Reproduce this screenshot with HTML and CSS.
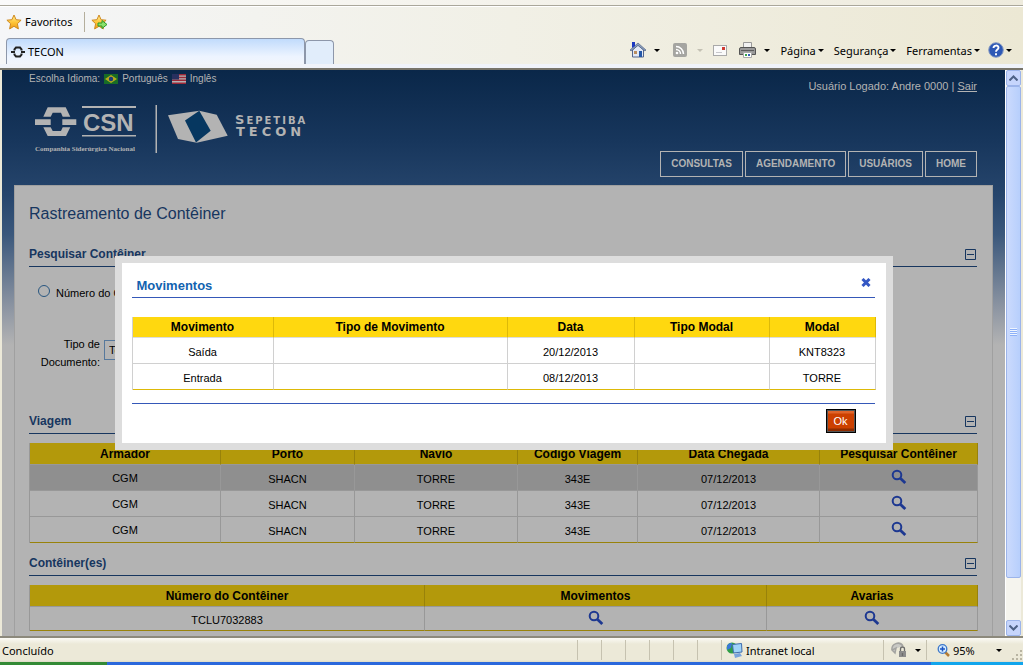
FILE: index.html
```html
<!DOCTYPE html>
<html lang="pt-BR">
<head>
<meta charset="utf-8">
<title>TECON</title>
<link rel="stylesheet" href="styles.css">
</head>
<body>
<svg class="defs" aria-hidden="true">
  <linearGradient id="gold" x1="0" y1="0" x2="0" y2="1"><stop offset="0" stop-color="#fff0a0"/><stop offset=".5" stop-color="#ffc83c"/><stop offset="1" stop-color="#f09a10"/></linearGradient>
  <symbol id="lens" viewBox="0 0 16 16"><circle cx="6" cy="6" r="4.3" fill="none" stroke="#1d3891" stroke-width="2"/><path d="M9.3 9.3l5 4.8" stroke="#1d3891" stroke-width="2.8"/></symbol>
  <symbol id="star" viewBox="0 0 16 16"><path d="M8 1l2.1 4.7 5 .5-3.7 3.500 1 5.200L8 12.300l-4.400 2.600 1-5.200L.9 6.200l5-.5z" fill="url(#gold)" stroke="#cf8a20"/></symbol>
  <symbol id="minus" viewBox="0 0 11 11"><path d="M.5.5h10v10H.5zM2 5.500h7" fill="none" stroke="#17365f"/></symbol>
</svg>
<header class="chrome">
  <div class="sliver"></div>
  <div class="favbar">
    <button class="fav"><svg width="16" height="16"><use href="#star"/></svg>Favoritos</button>
    <span class="divider"></span>
    <button class="fav" aria-label="Adicionar a favoritos"><svg width="18" height="16" viewBox="0 0 18 16"><use href="#star" width="16" height="16"/><path d="M7 9h4V6.500l5 4-5 4V12H7z" fill="#8be06a" stroke="#2e9a2a"/></svg></button>
  </div>
  <div class="tabrow">
    <button class="tab"><svg width="14" height="12" viewBox="0 0 14 12"><path d="M0 6h4M10 6h4" stroke="#222" stroke-width="2"/><path d="M3.500 4.500V3.300L5 1.500h4l1.500 1.800v1.200M3.500 7.500v1.200L5 10.500h4l1.500-1.800V7.500" fill="none" stroke="#222" stroke-width="2"/></svg>TECON</button>
    <button class="newtab" aria-label="Nova guia"></button>
    <div class="tools">
      <button aria-label="Página inicial" class="t-home"><svg width="16" height="16" viewBox="0 0 16 16"><path d="M2.500 8v7h11V8L8 3z" fill="#e3e9f5" stroke="#53658c"/><path d="M0 8L8 1l8 7-1 1-7-5.500L1 9z" fill="#8da0bd" stroke="#44577d" stroke-width=".6"/><path d="M2 0h3v4l-3 2z" fill="#1b38c0"/><path d="M9 9h3v6H9z" fill="#2457a8"/><path d="M4 9h3v3H4z" fill="#b98d60"/></svg><i></i></button>
      <button aria-label="Feeds" class="t-rss"><svg width="14" height="14" viewBox="0 0 14 14"><rect width="14" height="14" rx="2" fill="#a5a5a1"/><circle cx="4" cy="10" r="1.300" fill="#fff"/><path d="M3 6.500a4.500 4.500 0 0 1 4.500 4.500M3 3.500a7.500 7.500 0 0 1 7.500 7.500" fill="none" stroke="#fff" stroke-width="1.500"/></svg><i class="pale"></i></button>
      <button aria-label="E-mail" class="t-mail"><svg width="14" height="11" viewBox="0 0 14 11"><rect x=".5" y=".5" width="13" height="10" fill="#fafafa" stroke="#a9a9a9"/><path d="M9 2h3v3H9z" fill="#cf3a32"/><path d="M3 7.500h6" stroke="#c8c8cc"/></svg></button>
      <button aria-label="Imprimir" class="t-print"><svg width="17" height="16" viewBox="0 0 17 16"><path d="M4.500.5h8V7h-8z" fill="#f2f2f2" stroke="#999"/><path d="M.5 7Q.5 5.500 2 5.500h13q1.500 0 1.500 1.500v5.500H.5z" fill="#9a9a9a" stroke="#555"/><path d="M2 8.500h13" stroke="#5c5c5c"/><path d="M4.500 10.500h8v5h-8z" fill="#fff" stroke="#aaa"/><path d="M6 12h2v2H6z" fill="#38a548"/><path d="M9 12h2v2H9z" fill="#355db8"/></svg><i></i></button>
      <button class="menu m1">Página<i></i></button>
      <button class="menu m2">Segurança<i></i></button>
      <button class="menu m3">Ferramentas<i></i></button>
      <button aria-label="Ajuda" class="menu help"><svg width="16" height="16" viewBox="0 0 16 16"><circle cx="8" cy="8" r="7.300" fill="#2d58b5" stroke="#889cc3"/><path d="M5.500 6c0-3.200 5-3.200 5-.2C10.500 7.600 8 7.600 8 9.800M8 11.300v1.900" fill="none" stroke="#fff" stroke-width="1.900"/></svg><i></i></button>
    </div>
  </div>
</header>

<div class="window">
  <div class="viewport">
    <div class="top">
      <div class="brand">
        <div class="langs">Escolha Idioma:
          <a href="#pt"><svg width="14" height="10" viewBox="0 0 14 10"><path d="M0 0h14v10H0z" fill="#176c26"/><path d="M7 1l6 4-6 4-6-4z" fill="#b5aa1c"/><circle cx="7" cy="5" r="2.200" fill="#1d3b78"/></svg>Português</a>
          <a href="#en"><svg width="14" height="10" viewBox="0 0 14 10"><path d="M0 0h14v10H0z" fill="#b3b3b3"/><path d="M0 .7h14M0 3.500h14M0 6.300h14M0 9.200h14" stroke="#9c2838" stroke-width="1.500"/><path d="M0 0h7v5.500H0z" fill="#28305f"/></svg>Inglês</a>
        </div>
        <svg class="logo" width="280" height="50" viewBox="0 0 280 50" fill="#b3b3b3">
          <path d="M12.700 2.300h18l4.600 9.400h-7.600L26 7.700h-8.300l-2 4H8.300zM8.300 22.300h7.400l2 3.700H26l1.700-3.700h7.600L31 31H12.700zM0 14.300h15.700V20H0zM27.300 14.300h14V20h-14z"/>
          <path d="M47 1h54v2H47zM47 30h54v1.500H47z"/>
          <text class="csn" x="48" y="26">CSN</text>
          <text class="tagline" x="0" y="46">Companhia Siderúrgica Nacional</text>
          <path d="M120.500 0h1.500v48h-1.500z"/>
          <path d="M133 10.300l31.300-4.600 17.400 4 11 21-31 7-18.700-3.700z"/>
          <path d="M164.300 5.700L150 15.500l11 22 14.700-11.800z" fill="#063760"/>
          <text class="name" x="200" y="19">S<tspan class="small">EPETIBA</tspan></text>
          <text class="name wide" x="201" y="31">TECON</text>
        </svg>
      </div>
      <div class="account">
        <div class="user">Usuário Logado: Andre 0000 | <a href="#sair">Sair</a></div>
        <nav><a href="#consultas">CONSULTAS</a><a href="#agendamento">AGENDAMENTO</a><a href="#usuarios">USUÁRIOS</a><a href="#home">HOME</a></nav>
      </div>
    </div>
    <main>
      <h1>Rastreamento de Contêiner</h1>
      <div class="sec"><h2>Pesquisar Contêiner</h2><button aria-label="Recolher pesquisa"><svg width="11" height="11"><use href="#minus"/></svg></button></div>
      <form>
        <div class="radio"><input type="radio" id="num"><label for="num">Número do Contêiner</label></div>
        <div class="field"><label for="tipo">Tipo de Documento:</label><select id="tipo"><option>Todos</option></select></div>
      </form>
      <div class="sec"><h2>Viagem</h2><button aria-label="Recolher viagem"><svg width="11" height="11"><use href="#minus"/></svg></button></div>
      <table class="grid trips">
        <colgroup><col class="owner"><col class="port"><col class="ship"><col class="code"><col class="date"><col class="find"></colgroup>
        <thead><tr><th>Armador</th><th>Porto</th><th>Navio</th><th>Código Viagem</th><th>Data Chegada</th><th>Pesquisar Contêiner</th></tr></thead>
        <tbody>
          <tr class="sel"><td>CGM</td><td>SHACN</td><td>TORRE</td><td>343E</td><td>07/12/2013</td><td class="act"><button aria-label="Pesquisar"><svg width="16" height="16"><use href="#lens"/></svg></button></td></tr>
          <tr><td>CGM</td><td>SHACN</td><td>TORRE</td><td>343E</td><td>07/12/2013</td><td class="act"><button aria-label="Pesquisar"><svg width="16" height="16"><use href="#lens"/></svg></button></td></tr>
          <tr><td>CGM</td><td>SHACN</td><td>TORRE</td><td>343E</td><td>07/12/2013</td><td class="act"><button aria-label="Pesquisar"><svg width="16" height="16"><use href="#lens"/></svg></button></td></tr>
        </tbody>
      </table>
      <div class="sec"><h2>Contêiner(es)</h2><button aria-label="Recolher contêineres"><svg width="11" height="11"><use href="#minus"/></svg></button></div>
      <table class="grid boxes">
        <colgroup><col class="number"><col class="moved"><col class="damage"></colgroup>
        <thead><tr><th>Número do Contêiner</th><th>Movimentos</th><th>Avarias</th></tr></thead>
        <tbody><tr><td>TCLU7032883</td><td class="act"><button aria-label="Ver movimentos"><svg width="16" height="16"><use href="#lens"/></svg></button></td><td class="act"><button aria-label="Ver avarias"><svg width="16" height="16"><use href="#lens"/></svg></button></td></tr></tbody>
      </table>
    </main>
    <div class="overlay">
      <section class="modal" role="dialog" aria-labelledby="mt">
        <div class="mhead"><h2 id="mt">Movimentos</h2><button aria-label="Fechar"><svg width="10" height="9" viewBox="0 0 10 9"><path d="M1.500 1l7 7M8.500 1l-7 7" stroke="#3457c4" stroke-width="3"/></svg></button></div>
        <table class="grid moves">
          <colgroup><col class="move"><col class="kind"><col class="when"><col class="modekind"><col class="mode"></colgroup>
          <thead><tr><th>Movimento</th><th>Tipo de Movimento</th><th>Data</th><th>Tipo Modal</th><th>Modal</th></tr></thead>
          <tbody><tr><td>Saída</td><td></td><td>20/12/2013</td><td></td><td>KNT8323</td></tr><tr><td>Entrada</td><td></td><td>08/12/2013</td><td></td><td>TORRE</td></tr></tbody>
        </table>
        <div class="mfoot"><button>Ok</button></div>
      </section>
    </div>
  </div>
  <div class="scroll">
    <button aria-label="Rolar para cima"><svg width="9" height="6" viewBox="0 0 9 6"><path d="M.5 5.500l4-4 4 4" fill="none" stroke="#4d6185" stroke-width="2"/></svg></button>
    <div class="thumb"><span></span></div>
    <button aria-label="Rolar para baixo"><svg width="9" height="6" viewBox="0 0 9 6"><path d="M.5.5l4 4 4-4" fill="none" stroke="#4d6185" stroke-width="2"/></svg></button>
  </div>
</div>

<footer class="status">
  <span class="done">Concluído</span>
  <span class="cell"></span><span class="cell"></span><span class="cell"></span><span class="cell"></span><span class="cell"></span><span class="cell"></span>
  <span class="zone"><svg width="17" height="16" viewBox="0 0 17 16"><circle cx="6" cy="6" r="5.500" fill="#2f9e46"/><path d="M1 4a5 5 0 0 1 5-3l-1 5-4 2z" fill="#3a78d8"/><path d="M6.500 2.500l9-1 .5 8.500-8.500 1z" fill="#9fd4f8" stroke="#3f6cae"/><path d="M8 12l6-1 2 3-7 2z" fill="#7aa4dc"/></svg>Intranet local</span>
  <button class="lock" aria-label="Modo protegido"><svg width="17" height="16" viewBox="0 0 17 16"><path d="M1 8a6 6 0 0 1 11-4M4 11L1 8l4-2z" fill="#c9c9c5" stroke="#a3a3a0" stroke-width="1.500"/><path d="M8 9h7v6H8z" fill="#8c8c8c"/><path d="M9.500 9V7a2 2 0 0 1 4 0v2M11.500 11v3" fill="none" stroke="#6b6b6b" stroke-width="1.300"/></svg><i></i></button>
  <button class="zoom"><svg width="13" height="13" viewBox="0 0 13 13"><path d="M8 8l4 4" stroke="#b57b33" stroke-width="2.500"/><circle cx="5.500" cy="5" r="4.300" fill="#d6ecff" stroke="#3b76c9" stroke-width="1.300"/><path d="M3 5h5M5.500 2.500v5" stroke="#1b55c4" stroke-width="1.500"/></svg>95%<i></i></button>
  <svg class="grip" width="12" height="12" viewBox="0 0 12 12"><path d="M9 0h2v2H9zM5 4h2v2H5zM9 4h2v2H9zM1 8h2v2H1zM5 8h2v2H5zM9 8h2v2H9z" fill="#b8b4a2"/></svg>
</footer>
<div class="taskbar"><span class="start"></span><span class="tasks"></span><span class="tray"></span></div>
</body>
</html>
```
FILE: styles.css
```css
* { box-sizing: border-box; }
body { margin: 0; height: 100vh; display: flex; flex-direction: column; overflow: hidden; font: 11px "Liberation Sans", Arial, sans-serif; color: #000; background: #ece9d8; }
button { font: inherit; color: inherit; background: none; border: 0; padding: 0; display: inline-flex; align-items: center; }
h1, h2 { margin: 0; }
svg { flex: none; }
i { border: 3px solid transparent; border-top-color: #000; border-bottom: 0; }
.pale { border-top-color: #c4c1b4; }
.defs { position: absolute; width: 0; height: 0; }

.chrome, .status { font-family: "Noto Sans", Tahoma, sans-serif; }
.chrome { flex: none; background: linear-gradient(to right, #f5f6f8, #f1f0e6 50%, #ece8d4); border-bottom: 2px solid #77746a; }
.sliver { height: 6px; background: linear-gradient(to right, #fafafa, #eeebdd); border-bottom: 1px solid #aaa79b; }
.favbar { height: 32px; display: flex; align-items: center; padding: 0 0 2px 6px; border-top: 1px solid #fff; }
.fav { gap: 3px; }
.divider { width: 1px; height: 20px; margin: 0 6px 0 12px; background: #b4ae9c; }
.tabrow { height: 30px; display: flex; align-items: flex-start; padding-left: 6px; border-bottom: 4px solid #f0f3fa; }
.tab, .newtab { border: 1px solid #8d97aa; border-bottom: 0; border-radius: 4px 4px 0 0; height: 26px; }
.tab { width: 299px; gap: 3px; padding-left: 4px; background: linear-gradient(#c1dbfc, #edf4ff 70%, #f1f5fc); }
.newtab { width: 29px; height: 24px; align-self: flex-end; background: #e1edfb; }
.tools { flex: 1; height: 24px; display: flex; align-items: center; justify-content: flex-end; padding-right: 11px; }
.t-home, .t-print { gap: 8px; }
.t-rss { gap: 10px; margin-left: 13px; }
.t-mail { margin-left: 10px; }
.t-print { margin-left: 12px; }
.menu { gap: 2px; }
.m1, .m2, .m3 { margin-left: 10px; }
.help { margin-left: 8px; }

.window { flex: 1; min-height: 0; display: flex; padding: 0 2px; }
.viewport { flex: 1; min-width: 0; position: relative; overflow: hidden; padding: 0 12px; background: linear-gradient(#0a2749, #17365c 70px, #26456c 125px, #3b587c 165px, #8a93a1 235px, #b3b3b3 275px); }
.top { display: flex; justify-content: space-between; height: 115px; padding: 2px 16px 8px 15px; color: #b3b3b3; }
.top a { color: inherit; }
.langs { display: flex; gap: 4px; font-size: 10px; line-height: 14px; }
.langs a { display: flex; align-items: center; gap: 4px; text-decoration: none; }
.logo { display: block; margin: 19px 0 0 6px; }
.csn { font: bold 24px "Liberation Sans", sans-serif; }
.tagline { font: bold 7px "Liberation Serif", serif; }
.name { font: bold 13px "DejaVu Sans", sans-serif; letter-spacing: 2px; }
.small { font-size: 10px; }
.wide { letter-spacing: 4px; }
.account { display: flex; flex-direction: column; justify-content: space-between; align-items: flex-end; padding-top: 7px; }
.user { line-height: 14px; }
nav { display: flex; gap: 2px; }
nav a { border: 1px solid #b3b3b3; padding: 0 10px; font-size: 10px; font-weight: bold; line-height: 24px; text-decoration: none; }

main { padding: 18px 15px 8px 14px; background: #b3b3b3; border: 1px solid #a0a0a0; }
h1 { font-size: 16px; line-height: 20px; font-weight: normal; color: #17365f; }
.sec { display: flex; justify-content: space-between; align-items: center; margin: 22px 0 9px; padding: 0 1px 4px 0; border-bottom: 1px solid #17365f; }
.sec h2 { font-size: 12px; line-height: 16px; color: #17365f; }
form { padding: 8px 0 20px; }
.radio { display: flex; align-items: center; gap: 6px; height: 18px; padding-left: 9px; }
.radio input { appearance: none; width: 12px; height: 12px; margin: 0 0 4px; border: 1px solid #285680; border-radius: 50%; }
.field { display: flex; align-items: flex-start; gap: 4px; margin-top: 33px; }
.field label { width: 71px; line-height: 18px; text-align: right; }
.field select { appearance: none; width: 150px; height: 20px; margin: 5px 0 0; padding: 0 4px; border: 1px solid #56789c; border-radius: 0; background: #b3b3b3; font: inherit; }

.grid { width: 100%; table-layout: fixed; border-spacing: 0; text-align: center; border-left: 1px solid #989898; }
.grid th { height: 22px; padding: 0; font-size: 12px; background: #b3990b; border-right: 1px solid #98820a; border-bottom: 1px solid #989898; }
.grid td { height: 26px; padding: 3px 0 0; border-right: 1px solid #989898; border-bottom: 1px solid #989898; }
.grid tr > :first-child { padding-top: 0; }
.grid tbody tr:last-child td { border-bottom-color: #98820a; }
.grid .act { padding: 0; }
.grid .act svg { display: block; }
.sel { background: #8f8f8f; }
.trips + .sec { margin-top: 12px; }
.boxes td, .boxes tr > td:first-child { height: 24px; padding-top: 2px; }
.owner { width: 191px; } .port { width: 134px; } .ship { width: 163px; }
.code { width: 120px; } .date { width: 182px; } .find { width: 158px; }
.number { width: 395px; } .moved { width: 342px; } .damage { width: 211px; }
.move { width: 141px; } .kind { width: 234px; } .when { width: 127px; } .modekind { width: 135px; } .mode { width: 106px; }

.overlay { position: absolute; inset: 0; display: flex; justify-content: center; align-items: flex-start; padding-top: 186px; }
.modal { width: 778px; max-width: 90%; border: 7px solid #ddd; background: #fff; padding: 15px 11px 10px 10px; }
.mhead { display: flex; justify-content: space-between; align-items: flex-start; padding: 0 4px 3px 5px; border-bottom: 1px solid #3558b8; }
.mhead h2 { font-size: 13px; line-height: 16px; color: #1263b0; }
.moves { margin-top: 19px; border-left-color: #d0d0d0; }
.moves th { height: 21px; background: #ffd80f; border-right-color: #ddb908; border-bottom-color: #dcdcdc; }
.moves td { padding-top: 2px; border-color: #d0d0d0; }
.moves tr > td:first-child { padding-top: 2px; }
.moves tbody tr:last-child td { border-bottom-color: #ddb908; }
.mfoot { display: flex; justify-content: flex-end; margin-top: 13px; padding: 5px 19px 0 0; border-top: 1px solid #3558b8; }
.mfoot button { width: 30px; height: 24px; justify-content: center; color: #fff; border: 1px solid #000; background: linear-gradient(#e0642a 3px, #cc4000 4px, #cc4000 18px, #8f2c00 19px); box-shadow: inset 0 0 0 1px #555; }

.scroll { flex: none; width: 16px; display: flex; flex-direction: column; background: #f5f4ee; border-left: 1px solid #fff; }
.scroll button { height: 16px; justify-content: center; background: #c6d5fc; border: 1px solid #9cb4ea; border-radius: 2px; }
.thumb { flex: 12; display: flex; align-items: center; justify-content: center; background: linear-gradient(to right, #cbdafd, #b7cffc); border: 1px solid #9cb4ea; border-radius: 2px; margin-bottom: 42px; }
.thumb span { width: 7px; height: 8px; background: repeating-linear-gradient(#eef4fe 0 1px, #8cb0f8 1px 2px); }

.status { flex: none; height: 26px; display: flex; align-items: stretch; background: linear-gradient(#fbfaf5, #ece9d8 6px, #ece9d8 22px, #dedac6); border-top: 2px solid #8c897c; }
.status > * { display: flex; align-items: center; }
.done { flex: 1; padding-left: 2px; }
.cell, .zone, .lock, .zoom { border-left: 1px solid #c6c2b0; margin: 2px 0; }
.cell { width: 24px; }
.zone { width: 162px; gap: 3px; padding-left: 4px; }
.lock { width: 43px; gap: 7px; padding-left: 7px; }
.zoom { width: 82px; gap: 3px; padding-left: 10px; }
.zoom i { margin-left: 18px; }
.status .grip { align-self: flex-end; margin-left: 3px; }
.taskbar { flex: none; height: 3px; display: flex; }
.start { width: 107px; background: #338a35; }
.tasks { flex: 1; background: #2a68dc; }
.tray { width: 92px; background: #12a5ec; }
```
